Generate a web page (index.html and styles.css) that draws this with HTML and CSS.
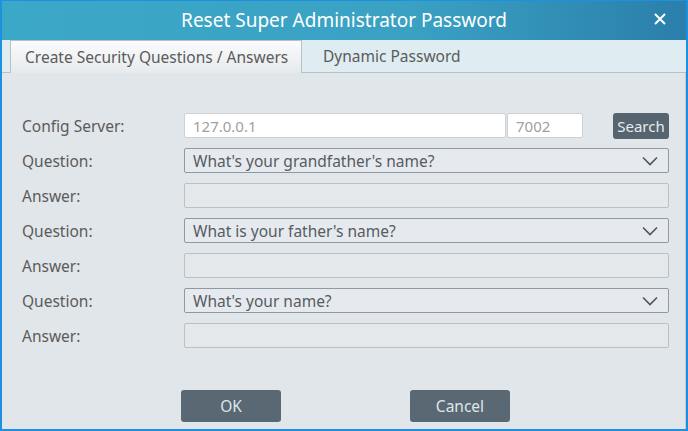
FILE: index.html
```html
<!DOCTYPE html>
<html lang="en">
  <head>
    <meta charset="UTF-8" />
    <meta name="viewport" content="width=device-width, initial-scale=1.0" />
    <title>Reset Super Administrator Password</title>
    <link rel="stylesheet" href="styles.css">
  </head>
  <body>
    <div class="window">
      <div class="titlebar">
        <span class="title">Reset Super Administrator Password</span>
        <span class="close">
          <svg width="12" height="12" viewBox="0 0 12 12">
            <path d="M1 1 L11 11 M11 1 L1 11" stroke="#fff" stroke-width="2" fill="none" />
          </svg>
        </span>
      </div>

      <div class="tabs">
        <div class="tab active">Create Security Questions / Answers</div>
        <div class="tab">Dynamic Password</div>
      </div>

      <div class="content">
        <div class="form">
          <div class="row">
            <label>Config Server:</label>
            <div class="field server">
              <input class="input ip" type="text" value="127.0.0.1" />
              <input class="input port" type="text" value="7002" />
              <button class="search-btn">Search</button>
            </div>
          </div>

          <div class="row">
            <label>Question:</label>
            <div class="field select">
              <span>What's your grandfather's name?</span>
              <svg class="arrow" width="16" height="10" viewBox="0 0 16 10">
                <path d="M1 1.5 L8 8.5 L15 1.5" stroke="#4a5560" stroke-width="1.6" fill="none" />
              </svg>
            </div>
          </div>
          <div class="row">
            <label>Answer:</label>
            <div class="field"><input class="input answer" type="text" /></div>
          </div>

          <div class="row">
            <label>Question:</label>
            <div class="field select">
              <span>What is your father's name?</span>
              <svg class="arrow" width="16" height="10" viewBox="0 0 16 10">
                <path d="M1 1.5 L8 8.5 L15 1.5" stroke="#4a5560" stroke-width="1.6" fill="none" />
              </svg>
            </div>
          </div>
          <div class="row">
            <label>Answer:</label>
            <div class="field"><input class="input answer" type="text" /></div>
          </div>

          <div class="row">
            <label>Question:</label>
            <div class="field select">
              <span>What's your name?</span>
              <svg class="arrow" width="16" height="10" viewBox="0 0 16 10">
                <path d="M1 1.5 L8 8.5 L15 1.5" stroke="#4a5560" stroke-width="1.6" fill="none" />
              </svg>
            </div>
          </div>
          <div class="row">
            <label>Answer:</label>
            <div class="field"><input class="input answer" type="text" /></div>
          </div>
        </div>

        <div class="buttons">
          <button class="button">OK</button>
          <button class="button">Cancel</button>
        </div>
      </div>
    </div>
  </body>
</html>
```

FILE: styles.css
```css
body {
  margin: 0;
  padding: 0;
  font-family: "Noto Sans", "Open Sans", sans-serif;
  background-color: #1e90e0;
}
.window {
  width: 688px;
  height: 431px;
  box-sizing: border-box;
  border: 2px solid #1e90e0;
  border-top-width: 1px;
  display: flex;
  flex-direction: column;
  background-color: #e1e6ea;
  overflow: hidden;
}
.titlebar {
  height: 39px;
  flex-shrink: 0;
  display: flex;
  align-items: center;
  justify-content: center;
  position: relative;
  background: linear-gradient(to right, #3ca8c8, #3aa1c3 60%, #2a7fab);
}
.title {
  color: #fff;
  font-size: 19px;
  margin-top: -2px;
}
.close {
  position: absolute;
  right: 20px;
  top: 12px;
  display: flex;
}
.tabs {
  height: 33px;
  flex-shrink: 0;
  display: flex;
  align-items: flex-end;
  padding-left: 8px;
  background-color: #dfedf2;
  border-bottom: 1px solid #b7c2c8;
  box-sizing: border-box;
}
.tab {
  height: 32px;
  box-sizing: border-box;
  display: flex;
  align-items: center;
  padding: 0 21px;
  font-size: 15.5px;
  color: #5b5b5b;
  white-space: nowrap;
}
.tab.active {
  width: 292px;
  padding: 0 0 0 14px;
  border: 1px solid #b7c2c8;
  border-bottom: none;
  background: linear-gradient(to bottom, #fbfbfc, #e6eaed);
  margin-bottom: -1px;
  height: 33px;
}
.content {
  flex: 1;
  display: flex;
  flex-direction: column;
  padding: 40px 16px 0 20px;
  border-right: 1px solid #c4cacf;
}
.form {
  display: flex;
  flex-direction: column;
  gap: 10px;
}
.row {
  display: flex;
  align-items: center;
  height: 25px;
}
.row label {
  width: 162px;
  flex-shrink: 0;
  font-size: 15.5px;
  color: #5b5b5b;
}
.field {
  flex: 1;
  display: flex;
  height: 25px;
}
.input {
  box-sizing: border-box;
  height: 25px;
  margin: 0;
  padding: 0 8px;
  font-family: "Noto Sans", "Open Sans", sans-serif;
  font-size: 15px;
  color: #a0a0a0;
  outline: none;
}
.ip,
.port {
  background-color: #fff;
  border: 1px solid #cdd1d4;
  border-radius: 2px;
}
.ip {
  width: 322px;
}
.port {
  width: 76px;
  margin-left: 1px;
}
.search-btn {
  margin-left: 30px;
  width: 56px;
  height: 26px;
  padding: 0;
  border: none;
  border-radius: 3px;
  background-color: #56646f;
  color: #e6ecf0;
  font-family: "Noto Sans", "Open Sans", sans-serif;
  font-size: 15px;
}
.answer {
  width: 100%;
  background-color: #e4e8eb;
  border: 1px solid #b9c0c6;
  border-radius: 2px;
}
.select {
  box-sizing: border-box;
  align-items: center;
  justify-content: space-between;
  padding: 0 10px 0 8px;
  background-color: #e6eaee;
  border: 1px solid #8d99a4;
  border-radius: 2px;
  font-size: 15.5px;
  color: #555c63;
}
.buttons {
  display: flex;
  gap: 129px;
  margin-top: 42px;
  padding-left: 159px;
}
.button {
  width: 100px;
  height: 32px;
  border: none;
  border-radius: 3px;
  background-color: #5a6874;
  color: #dfe6eb;
  font-family: "Noto Sans", "Open Sans", sans-serif;
  font-size: 15.5px;
  padding: 0;
}
```
